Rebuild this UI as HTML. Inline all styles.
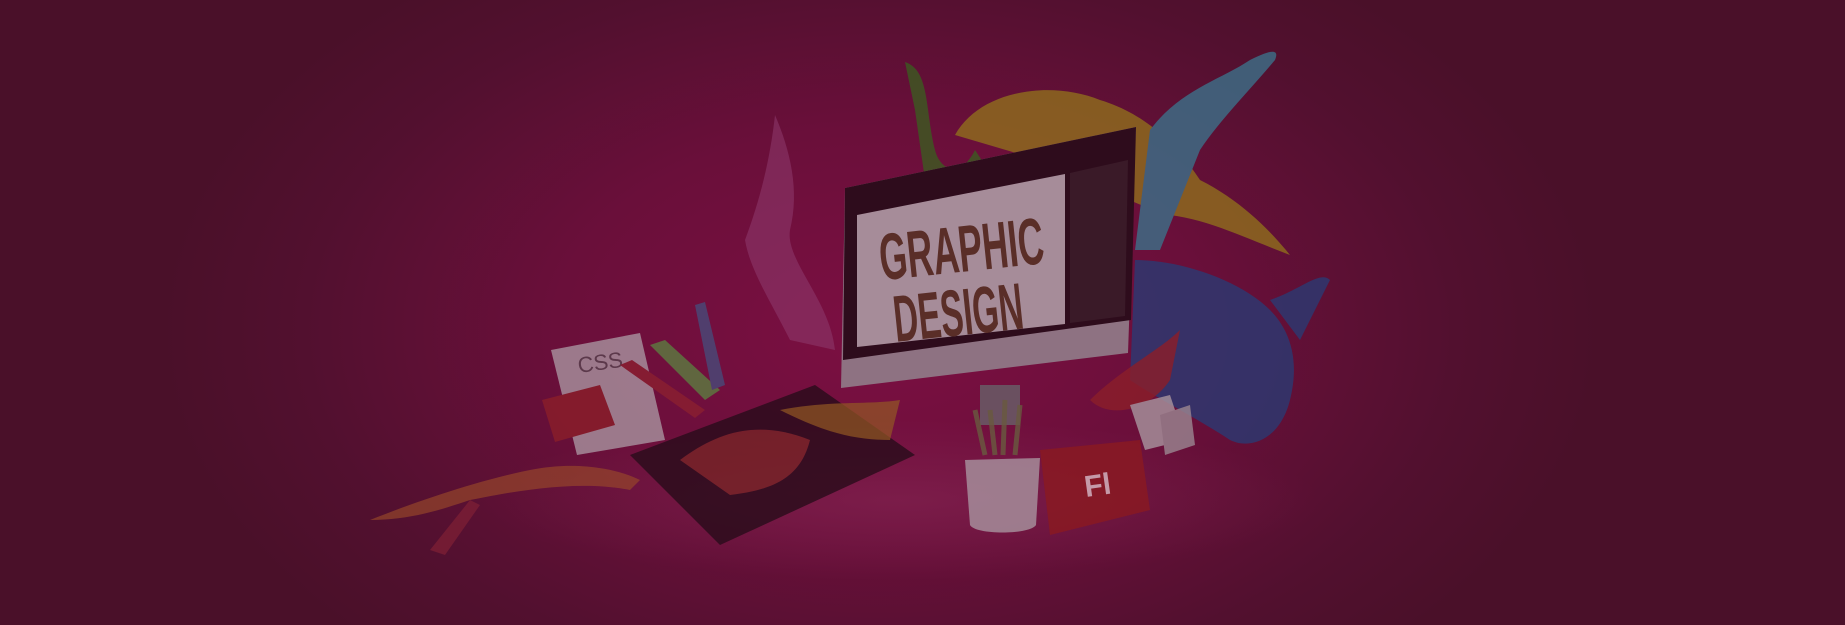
<!DOCTYPE html>
<html><head><meta charset="utf-8"><style>
html,body{margin:0;padding:0;width:1845px;height:625px;overflow:hidden;background:#4a1029}
svg{display:block}
</style></head><body>
<svg width="1845" height="625" viewBox="0 0 1845 625" xmlns="http://www.w3.org/2000/svg">
<defs>
<radialGradient id="bg" cx="880" cy="330" r="720" gradientUnits="userSpaceOnUse" gradientTransform="translate(880 330) scale(1 0.62) translate(-880 -330)">
<stop offset="0" stop-color="#7c0f42"/><stop offset="0.45" stop-color="#6a0f3a"/><stop offset="0.8" stop-color="#52102f"/><stop offset="1" stop-color="#4a1029"/>
</radialGradient>
<radialGradient id="glow" cx="0.5" cy="0.5" r="0.5"><stop offset="0" stop-color="#8a2a58" stop-opacity="0.5"/><stop offset="1" stop-color="#8a2a58" stop-opacity="0"/></radialGradient>
</defs>
<rect width="1845" height="625" fill="url(#bg)"/>
<ellipse cx="900" cy="500" rx="420" ry="80" fill="url(#glow)"/>
<g opacity="0.82">
<path d="M775 115 C790 150 800 190 790 230 C785 260 830 300 835 350 L790 340 C770 300 750 270 745 240 C760 200 770 160 775 115Z" fill="#8d3a6c" opacity="0.7"/>
<path d="M905 62 C930 70 925 110 935 150 C940 170 960 180 975 150 L985 165 C960 200 935 200 925 180 L915 110 Z" fill="#3e5a22"/>
<path d="M955 135 C980 90 1050 80 1100 100 C1150 115 1180 150 1200 180 C1240 200 1270 230 1290 255 C1250 240 1210 220 1170 215 C1120 200 1080 175 1040 160 Z" fill="#8f6d1e"/>
<path d="M1150 130 C1180 90 1220 80 1250 60 C1270 50 1280 48 1275 60 C1250 90 1220 120 1200 150 L1160 250 L1135 250 Z" fill="#3d6f88"/>
<path d="M1135 260 C1180 260 1240 280 1270 310 C1290 330 1300 360 1290 400 C1280 440 1250 450 1230 440 C1200 420 1160 400 1130 380 Z" fill="#2d3a72"/>
<path d="M1270 300 C1300 290 1320 270 1330 280 L1300 340 Z" fill="#2d3a72"/>
</g>
<path d="M845 188 L1136 127 L1128 353 L841 388 Z" fill="#8e7282"/>
<path d="M845 188 L1136 127 L1131 320 L843 360 Z" fill="#2e0c1c"/>
<path d="M857 215 L1065 174 L1065 324 L857 347 Z" fill="#a68c99"/>
<path d="M1070 173 L1128 160 L1125 316 L1070 323 Z" fill="#3a1a28"/>
<text x="880" y="272" transform="rotate(-6 960 260)" font-family="Liberation Sans, sans-serif" font-weight="bold" font-size="66" fill="#5a2e28" textLength="165" lengthAdjust="spacingAndGlyphs">GRAPHIC</text>
<text x="893" y="335" transform="rotate(-6 960 310)" font-family="Liberation Sans, sans-serif" font-weight="bold" font-size="66" fill="#5a2e28" textLength="130" lengthAdjust="spacingAndGlyphs">DESIGN</text>
<rect x="980" y="385" width="40" height="40" fill="#6a5060"/>
<g opacity="0.82">
<path d="M1090 400 C1120 370 1160 350 1180 330 L1170 380 C1150 410 1110 420 1090 400Z" fill="#8a1f2a"/>
<path d="M551 350 L640 333 L665 440 L577 455 Z" fill="#a8929e"/>
<text x="578" y="370" transform="rotate(-8 600 365)" font-family="Liberation Sans, sans-serif" font-size="22" fill="#5a4450">CSS</text>
<path d="M542 400 L600 385 L615 425 L555 442 Z" fill="#8a1f2a"/>
<path d="M650 345 L665 340 L720 390 L705 400Z" fill="#5d7a40"/>
<path d="M695 305 L705 302 L725 385 L712 390 Z" fill="#4a4a78"/>
<path d="M620 365 L632 360 L705 410 L695 418 Z" fill="#8a2030"/>
<path d="M630 455 L815 385 L915 455 L720 545 Z" fill="#2a0d1c"/>
<path d="M680 460 C720 430 760 420 810 440 C800 480 770 490 730 495 Z" fill="#8a2a2a" opacity="0.8"/>
<path d="M780 410 C830 400 870 405 900 400 L890 440 C850 440 820 430 780 410Z" fill="#9a6a1e" opacity="0.7"/>
<path d="M370 520 C420 500 480 480 530 470 C580 460 620 470 640 480 L630 490 C580 480 520 490 470 500 C440 510 410 520 370 520Z" fill="#9a4a2a" opacity="0.8"/>
<path d="M430 550 L470 500 L480 505 L445 555Z" fill="#7a1f35"/>
<path d="M965 460 L1040 458 L1036 525 C1030 535 975 535 970 525 Z" fill="#a8929e"/>
<path d="M975 410 L985 455 M990 410 L995 455 M1005 400 L1003 455 M1020 405 L1015 455" stroke="#6a5a40" stroke-width="5"/>
<path d="M1040 450 L1140 440 L1150 510 L1050 535 Z" fill="#8a1a22"/>
<text x="1085" y="495" transform="rotate(-8 1100 490)" font-family="Liberation Sans, sans-serif" font-weight="bold" font-size="30" fill="#d8b8c0">Fl</text>
<path d="M1130 405 L1170 395 L1185 440 L1145 450 Z" fill="#a8949e"/>
<path d="M1160 415 L1190 405 L1195 445 L1165 455 Z" fill="#9a8690"/>
</g>
</svg>
</body></html>
